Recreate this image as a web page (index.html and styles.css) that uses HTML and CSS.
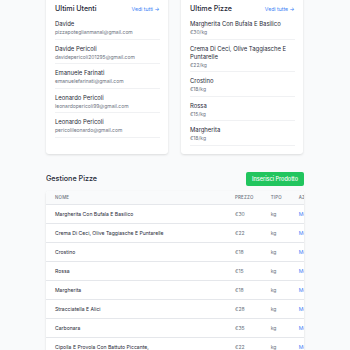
FILE: index.html
```html
<!DOCTYPE html>
<html lang="it">
<head>
<meta charset="utf-8">
<title>Dashboard</title>
<link rel="stylesheet" href="styles.css">
</head>
<body>
<main class="container">
  <section class="cards">
    <div class="card">
      <div class="card-head">
        <h2 class="card-title">Ultimi Utenti</h2>
        <a class="more" href="#">Vedi tutti →</a>
      </div>
      <ul class="list">
        <li class="item"><div class="name">Davide</div><div class="sub">pizzapoteglianmanal@gmail.com</div></li>
        <li class="item"><div class="name">Davide Pericoli</div><div class="sub">davidepericoli201295@gmail.com</div></li>
        <li class="item"><div class="name">Emanuele Farinati</div><div class="sub">emanuelefarinati@gmail.com</div></li>
        <li class="item"><div class="name">Leonardo Pericoli</div><div class="sub">leonardopericoli99@gmail.com</div></li>
        <li class="item"><div class="name">Leonardo Pericoli</div><div class="sub">pericolileonardo@gmail.com</div></li>
      </ul>
    </div>
    <div class="card">
      <div class="card-head">
        <h2 class="card-title">Ultime Pizze</h2>
        <a class="more" href="#">Vedi tutte →</a>
      </div>
      <ul class="list">
        <li class="item"><div class="name">Margherita Con Bufala E Basilico</div><div class="sub">€30/kg</div></li>
        <li class="item"><div class="name">Crema Di Ceci, Olive Taggiasche E Puntarelle</div><div class="sub">€22/kg</div></li>
        <li class="item"><div class="name">Crostino</div><div class="sub">€18/kg</div></li>
        <li class="item"><div class="name">Rossa</div><div class="sub">€15/kg</div></li>
        <li class="item"><div class="name">Margherita</div><div class="sub">€18/kg</div></li>
      </ul>
    </div>
  </section>

  <section class="manage">
    <div class="manage-head">
      <div class="manage-title">Gestione Pizze</div>
      <div class="btn">Inserisci Prodotto</div>
    </div>
    <div class="table-wrap">
      <div class="table">
        <div class="row head"><span>Nome</span><span>Prezzo</span><span>Tipo</span><span>Azioni</span></div>
        <div class="row"><span class="n">Margherita Con Bufala E Basilico</span><span>€30</span><span>kg</span><span class="a">Modifica</span></div>
        <div class="row"><span class="n">Crema Di Ceci, Olive Taggiasche E Puntarelle</span><span>€22</span><span>kg</span><span class="a">Modifica</span></div>
        <div class="row"><span class="n">Crostino</span><span>€18</span><span>kg</span><span class="a">Modifica</span></div>
        <div class="row"><span class="n">Rossa</span><span>€15</span><span>kg</span><span class="a">Modifica</span></div>
        <div class="row"><span class="n">Margherita</span><span>€18</span><span>kg</span><span class="a">Modifica</span></div>
        <div class="row"><span class="n">Stracciatella E Alici</span><span>€28</span><span>kg</span><span class="a">Modifica</span></div>
        <div class="row"><span class="n">Carbonara</span><span>€35</span><span>kg</span><span class="a">Modifica</span></div>
        <div class="row"><span class="n">Cipolla E Provola Con Battuto Piccante,</span><span>€22</span><span>kg</span><span class="a">Modifica</span></div>
      </div>
    </div>
  </section>
</main>
</body>
</html>
```

FILE: styles.css
```css
* { box-sizing: border-box; }
html, body { margin: 0; padding: 0; }
body {
  background: #f9fafb;
  font-family: Inter, "Noto Sans", "Liberation Sans", sans-serif;
  color: #1f2937;
  overflow: hidden;
}
.container {
  width: 258px;
  margin: -5px 0 0 46px;
}
.cards {
  display: grid;
  grid-template-columns: 122px 122px;
  gap: 13px;
}
.card {
  background: #fff;
  border-radius: 3px;
  box-shadow: 0 1px 3px rgba(0,0,0,0.08), 0 1px 2px rgba(0,0,0,0.05);
  padding: 9px 8.5px 8.5px 9px;
}
.card-head {
  display: flex;
  justify-content: space-between;
  align-items: center;
  height: 10px;
  margin-bottom: 1px;
}
.card-title {
  margin: 0;
  font-size: 7.1px;
  font-weight: 500;
  line-height: 10px;
  color: #1f2937;
}
.more {
  font-size: 5.2px;
  color: #3b82f6;
  text-decoration: none;
  line-height: 8px;
  white-space: nowrap;
}
.list { list-style: none; margin: 0; padding: 0; }
.item {
  padding: 5px 0 2.5px;
  border-bottom: 1px solid #f0f1f3;
}
.name {
  font-size: 5.9px;
  line-height: 8px;
  color: #1f2937;
}
.sub {
  font-size: 5px;
  line-height: 8px;
  color: #6b7280;
}
.manage { margin-top: 17.7px; }
.manage-head {
  display: grid;
  grid-template-columns: 1fr 58px;
  align-items: center;
  height: 14px;
  margin-bottom: 5.7px;
  outline: 1px solid #f9fafb;
}
.manage-title {
  font-size: 7.2px;
  font-weight: 500;
  line-height: 10px;
  color: #1f2937;
  outline: 1px solid #f9fafb;
}
.btn {
  background: #22c55e;
  color: #fff;
  border-radius: 2px;
  font-size: 5.5px;
  font-weight: 500;
  line-height: 14px;
  height: 14px;
  text-align: center;
  white-space: nowrap;
}
.table-wrap {
  background: #fff;
  border-radius: 3px;
  box-shadow: 0 1px 3px rgba(0,0,0,0.08), 0 1px 2px rgba(0,0,0,0.05);
  overflow: hidden;
}
.table { width: 330px; }
.row {
  display: grid;
  grid-template-columns: 180px 35.7px 28px 86.3px;
  align-items: center;
  height: 19px;
  border-bottom: 1px solid #e5e7eb;
  font-size: 5.1px;
  color: #6b7280;
  white-space: nowrap;
}
.row > span { padding-left: 9px; }
.row.head {
  height: 14px;
  background: #f9fafb;
  font-size: 4.4px;
  font-weight: 500;
  letter-spacing: 0.22px;
  text-transform: uppercase;
  color: #6b7280;
}
.row .n { color: #1f2937; }
.row .a { color: #3b82f6; }
```
